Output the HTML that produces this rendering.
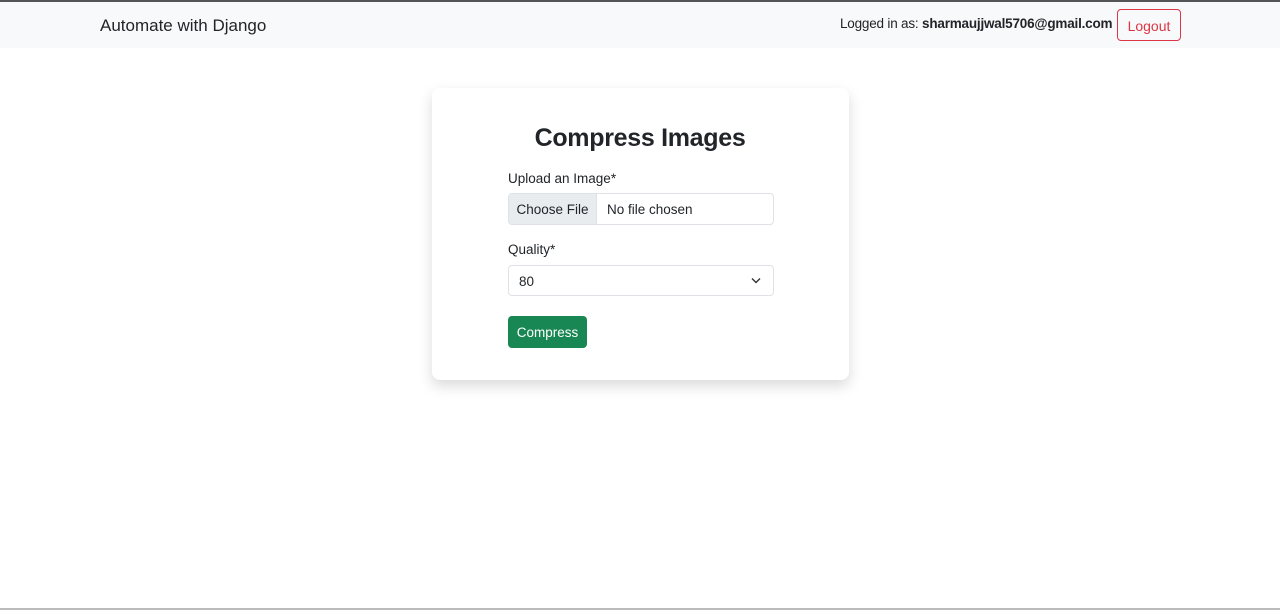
<!DOCTYPE html>
<html><head><style>
*{box-sizing:border-box}
body{margin:0;width:1280px;height:610px;background:#fff;font-family:"Liberation Sans",sans-serif;color:#212529;position:relative;overflow:hidden}
.top{position:absolute;left:0;top:0;width:1280px;height:2px;background:#555}
.nav{position:absolute;left:0;top:2px;width:1280px;height:46px;background:#f8f9fa}
.brand{position:absolute;left:100px;top:14px;font-size:17px}
.user{position:absolute;left:840px;top:14px;font-size:13.5px;letter-spacing:-0.2px}
.logout{position:absolute;left:1117px;top:7px;width:64px;height:32px;border:1px solid #dc3545;border-radius:4px;color:#dc3545;font-size:14px;text-align:center;line-height:32px}
.card{position:absolute;left:432px;top:88px;width:417px;height:292px;background:#fff;border-radius:8px;box-shadow:0 6px 14px rgba(0,0,0,.15)}
h1{position:absolute;left:0;width:100%;top:124px;margin:0;text-align:center;font-size:25px;font-weight:bold;letter-spacing:-0.3px;color:#212529}
.lbl{position:absolute;left:508px;font-size:13.5px}
.file{position:absolute;left:508px;top:193px;width:266px;height:32px;border:1px solid #dee2e6;border-radius:4px;font-size:13.5px;overflow:hidden}
.file span.b{position:absolute;left:0;top:0;width:88px;height:30px;background:#e9ecef;border-right:1px solid #dee2e6;text-align:center;line-height:32px}
.file span.t{position:absolute;left:98px;top:0;line-height:32px}
.sel{position:absolute;left:508px;top:265px;width:266px;height:31px;border:1px solid #dee2e6;border-radius:4px;font-size:13.5px;line-height:31px;padding-left:10px}
.btn{position:absolute;left:508px;top:316px;width:79px;height:32px;background:#198754;color:#fff;border-radius:4px;font-size:13.5px;text-align:center;line-height:34px}
.bot{position:absolute;left:0;top:608px;width:1280px;height:2px;background:#bbb}
</style></head><body>
<div class="top"></div>
<div class="nav">
<div class="brand">Automate with Django</div>
<div class="user">Logged in as: <b>sharmaujjwal5706@gmail.com</b></div>
<div class="logout">Logout</div>
</div>
<div class="card"></div>
<h1>Compress Images</h1>
<div class="lbl" style="top:171px">Upload an Image*</div>
<div class="file"><span class="b">Choose File</span><span class="t">No file chosen</span></div>
<div class="lbl" style="top:242px">Quality*</div>
<div class="sel">80<svg style="position:absolute;right:12px;top:11px" width="10" height="7" viewBox="0 0 10 7"><path d="M1 1.5L5 5.5L9 1.5" fill="none" stroke="#333" stroke-width="1.4"/></svg></div>
<div class="btn">Compress</div>
<div class="bot"></div>
</body></html>
